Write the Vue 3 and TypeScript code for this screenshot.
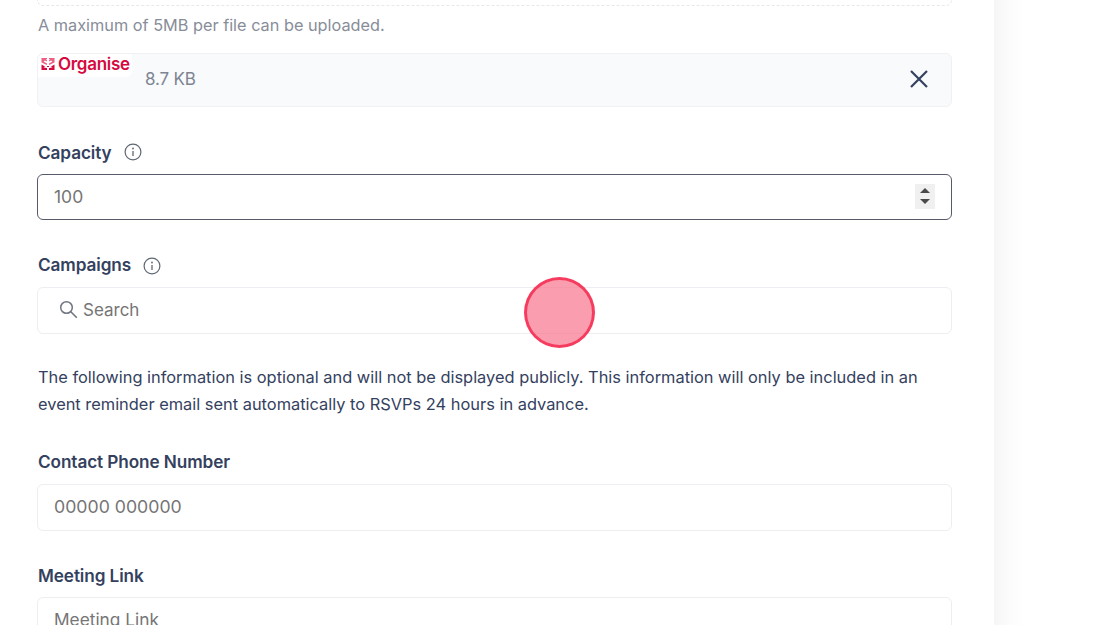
<script setup lang="ts">
const para = 'The following information is optional and will not be displayed publicly. This information will only be included in an event reminder email sent automatically to RSVPs 24 hours in advance.'
</script>

<template>
  <div class="page">
    <main class="panel">
      <form class="form" @submit.prevent>
        <div class="dropzone"></div>
        <p class="hint">A maximum of 5MB per file can be uploaded.</p>

        <div class="file">
          <div class="logo">
            <svg class="mark" width="14" height="14" viewBox="0 0 14 14" aria-hidden="true">
              <path d="M.5 1h5.500v1.200H4.500l1.500 1v1.300L4 3.500l-1.500 1 3.500 2V8L.5 5.500zM13.500 1H8v1.200h1.500L8 3.200v1.300l2-1 1.500 1L8 6.500V8l5.500-2.500z" fill="#ea5f82" />
              <path d="M.5 7.500l3.500 2-1.500 1 3.500.5V13H.5zM13.500 7.500L10 9.500l1.500 1L8 11v2h5.500zM6 9h2v1H6z" fill="#d6093f" />
            </svg>
            <span class="logo-text">Organise</span>
          </div>
          <span class="size">8.7 KB</span>
          <svg class="close" width="20" height="20" viewBox="0 0 20 20" aria-hidden="true">
            <path d="M2 2l16 16M18 2L2 18" stroke="#34415e" stroke-width="2.200" fill="none" />
          </svg>
        </div>

        <div class="label-row cap-label">
          <span class="label">Capacity</span>
          <svg class="info" width="18" height="18" viewBox="0 0 18 18" aria-hidden="true">
            <circle cx="9" cy="9" r="7.900" fill="none" stroke="#5f6773" stroke-width="1.200" />
            <path d="M9 8v5" stroke="#5f6773" stroke-width="1.300" />
            <circle cx="9" cy="5.500" r=".9" fill="#5f6773" />
          </svg>
        </div>
        <div class="input focused">
          <span class="value">100</span>
          <div class="spinner">
            <span class="up"></span>
            <span class="down"></span>
          </div>
        </div>

        <div class="label-row camp-label">
          <span class="label">Campaigns</span>
          <svg class="info camp-info" width="18" height="18" viewBox="0 0 18 18" aria-hidden="true">
            <circle cx="9" cy="9" r="7.900" fill="none" stroke="#5f6773" stroke-width="1.200" />
            <path d="M9 8v5" stroke="#5f6773" stroke-width="1.300" />
            <circle cx="9" cy="5.500" r=".9" fill="#5f6773" />
          </svg>
        </div>
        <div class="input search tall">
          <svg class="mag" width="19" height="19" viewBox="0 0 19 19" aria-hidden="true">
            <circle cx="7.500" cy="7.500" r="5.800" fill="none" stroke="#6f7580" stroke-width="1.500" />
            <path d="M11.800 11.800l6 6" stroke="#6f7580" stroke-width="1.600" />
          </svg>
          <span class="value narrow">Search</span>
        </div>

        <p class="para">{{ para }}</p>

        <div class="label-row phone-label"><span class="label">Contact Phone Number</span></div>
        <div class="input tall"><span class="value wide">00000 000000</span></div>

        <div class="label-row link-label"><span class="label">Meeting Link</span></div>
        <div class="input"><span class="value link-value">Meeting Link</span></div>
      </form>
    </main>
    <aside class="side"></aside>
    <div class="click"></div>
  </div>
</template>

<style scoped>
.page {
  position: relative;
  display: flex;
  width: 1120px;
  height: 625px;
  overflow: hidden;
  background: #fff;
  font-family: Inter, "Liberation Sans", sans-serif;
  color: #34415e;
}
.panel {
  width: 994px;
  flex: none;
  padding-left: 37px;
  box-sizing: border-box;
}
.side {
  flex: 1;
  background: linear-gradient(to right, #f6f6f8 0, #fbfbfc 14px, #fff 30px);
}
.form {
  width: 915px;
  display: flex;
  flex-direction: column;
}
.dropzone {
  height: 6px;
  flex: none;
  box-sizing: border-box;
  border: 1px dashed #e6e8ec;
  border-top: none;
  border-radius: 0 0 6px 6px;
}
.hint {
  margin: 8px 0 0 1px;
  font-size: 16.300px;
  line-height: 22px;
  color: #878d99;
}
.file {
  margin-top: 17px;
  height: 54px;
  flex: none;
  box-sizing: border-box;
  display: flex;
  border: 1px solid #eff1f4;
  border-radius: 6px;
  background: #f9fafc;
  position: relative;
}
.logo {
  width: 94px;
  height: 23px;
  display: flex;
  align-items: center;
  gap: 3px;
  padding: 0 0 3px 3px;
  box-sizing: border-box;
  background: #fff;
  border-radius: 6px 0 6px 0;
}
.logo-text {
  font-size: 17px;
  font-weight: 600;
  letter-spacing: -0.3px;
  color: #d6093f;
}
.size {
  margin-left: 13px;
  margin-bottom: 2px;
  align-self: center;
  font-size: 17px;
  letter-spacing: -0.15px;
  color: #7e8592;
}
.close {
  position: absolute;
  right: 22px;
  top: 15px;
}
.label-row {
  display: flex;
  align-items: center;
  gap: 12px;
  height: 24px;
  flex: none;
  padding-left: 1px;
  box-sizing: border-box;
}
.label {
  font-size: 17.200px;
  font-weight: 600;
  color: #34415e;
  letter-spacing: -0.1px;
}
.cap-label { margin-top: 33px; }
.link-label { margin-top: 32px; }
.camp-label { margin-top: 33px; padding-bottom: 2px; }
.phone-label { margin-top: 32px; padding-bottom: 2px; }
.camp-info { margin-top: 3px; }
.input {
  margin-top: 10px;
  height: 46px;
  flex: none;
  box-sizing: border-box;
  display: flex;
  align-items: center;
  justify-content: space-between;
  padding: 0 16px 2px;
  border: 1px solid #eceef1;
  border-radius: 6px;
  background: #fff;
}
.tall { height: 47px; }
.focused {
  border-color: #555b68;
  padding-right: 16px;
}
.search {
  justify-content: flex-start;
  gap: 5px;
  padding-left: 21px;
}
.value {
  font-size: 17.500px;
  color: #757575;
}
.narrow { font-size: 17px; }
.wide { font-size: 17.700px; }
.link-value { font-size: 17.300px; }
.spinner {
  width: 20px;
  height: 25px;
  background: #f0f0f0;
  display: flex;
  flex-direction: column;
  align-items: center;
  justify-content: center;
  gap: 6px;
}
.up, .down {
  width: 0;
  height: 0;
  border-left: 5px solid transparent;
  border-right: 5px solid transparent;
}
.up { border-bottom: 5px solid #4a4a4a; }
.down { border-top: 5px solid #4a4a4a; }
.para {
  margin: 30px 0 0 1px;
  font-size: 16.400px;
  line-height: 27px;
  color: #34415e;
}
.click {
  position: absolute;
  left: 524px;
  top: 277px;
  width: 71px;
  height: 71px;
  box-sizing: border-box;
  border-radius: 50%;
  border: 3.500px solid rgba(244, 55, 90, 0.95);
  background: rgba(248, 110, 135, 0.68);
}
</style>
